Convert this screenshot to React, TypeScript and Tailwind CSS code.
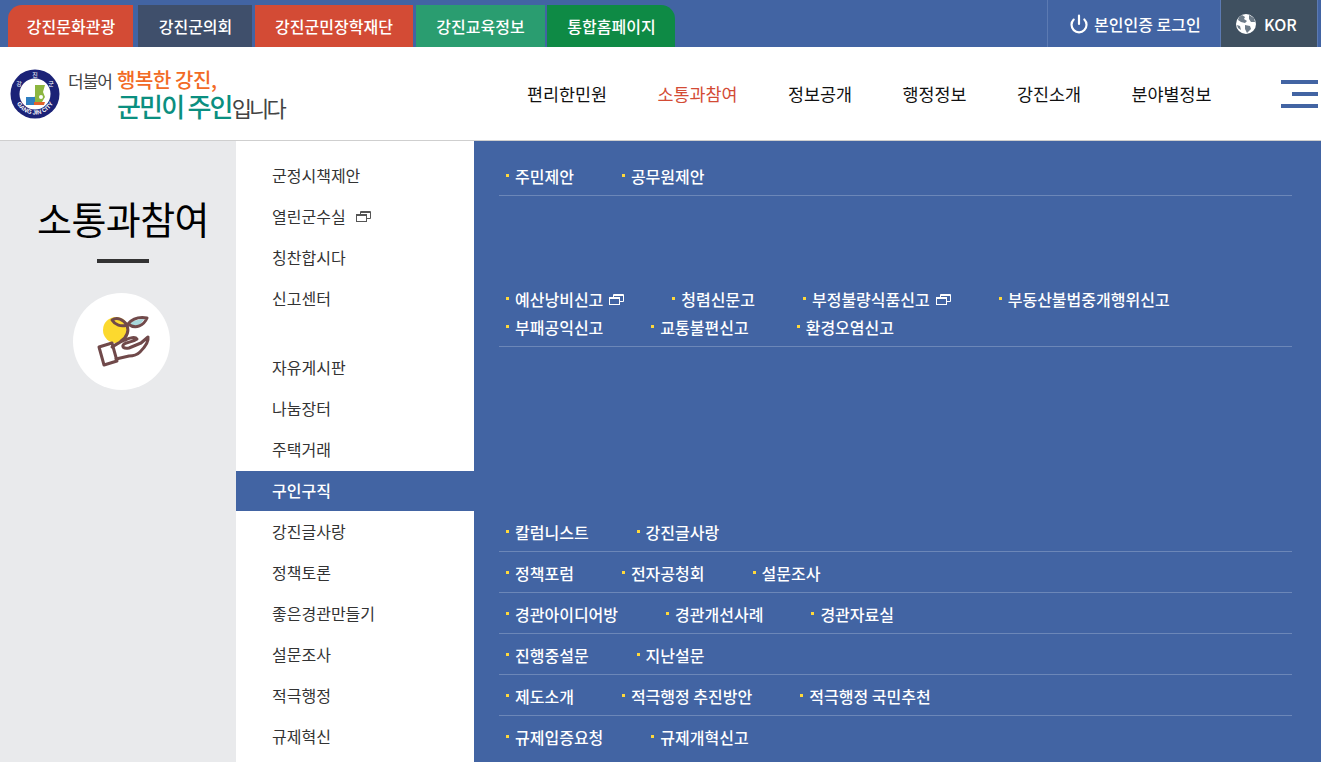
import { Power } from 'lucide-react'

interface SubItem {
  label: string
  external?: boolean
}

interface MenuRow {
  label: string
  external?: boolean
  active?: boolean
  subs?: SubItem[][]
}

const topTabs = [
  { label: '강진문화관광', className: 'ml-2 w-[125px] rounded-tl-[14px] bg-[#d34b35] pl-px' },
  { label: '강진군의회', className: 'ml-[5px] w-[114px] bg-[#3f4f6b] pl-px' },
  { label: '강진군민장학재단', className: 'ml-[3px] w-[158px] bg-[#d34b35]' },
  { label: '강진교육정보', className: 'ml-[3px] w-[129px] bg-[#2a9d70]' },
  { label: '통합홈페이지', className: 'ml-[2px] w-[128px] rounded-tr-[14px] bg-[#0e8a45] pl-px' },
]

const navItems = ['편리한민원', '소통과참여', '정보공개', '행정정보', '강진소개', '분야별정보']

const menuRows: MenuRow[] = [
  { label: '군정시책제안', subs: [[{ label: '주민제안' }, { label: '공무원제안' }]] },
  { label: '열린군수실', external: true },
  { label: '칭찬합시다' },
  {
    label: '신고센터',
    subs: [
      [
        { label: '예산낭비신고', external: true },
        { label: '청렴신문고' },
        { label: '부정불량식품신고', external: true },
        { label: '부동산불법중개행위신고' },
      ],
      [{ label: '부패공익신고' }, { label: '교통불편신고' }, { label: '환경오염신고' }],
    ],
  },
  { label: '자유게시판' },
  { label: '나눔장터' },
  { label: '주택거래' },
  { label: '구인구직', active: true },
  { label: '강진글사랑', subs: [[{ label: '칼럼니스트' }, { label: '강진글사랑' }]] },
  { label: '정책토론', subs: [[{ label: '정책포럼' }, { label: '전자공청회' }, { label: '설문조사' }]] },
  {
    label: '좋은경관만들기',
    subs: [[{ label: '경관아이디어방' }, { label: '경관개선사례' }, { label: '경관자료실' }]],
  },
  { label: '설문조사', subs: [[{ label: '진행중설문' }, { label: '지난설문' }]] },
  {
    label: '적극행정',
    subs: [[{ label: '제도소개' }, { label: '적극행정 추진방안' }, { label: '적극행정 국민추천' }]],
  },
  { label: '규제혁신', subs: [[{ label: '규제입증요청' }, { label: '규제개혁신고' }]] },
]

const WindowIcon = ({ color }: { color: string }) => (
  <svg width="15" height="11" viewBox="0 0 15 11" fill="none" stroke={color} className="shrink-0">
    <path d="M4.5 3V.5h10v7H11" />
    <line x1="4.5" y1="1.5" x2="14.5" y2="1.5" />
    <rect x="0.5" y="3.5" width="10" height="7" />
    <line x1="0.5" y1="4.5" x2="10.5" y2="4.5" />
  </svg>
)

const GlobeIcon = () => (
  <svg width="20" height="20" viewBox="0 0 20 20">
    <circle cx="10" cy="10" r="10" fill="#fff" />
    <path d="M6 1 9 3 8 5 11 7 9 9 5 8 2 6 3 3Z" fill="#6d7b88" />
    <path d="M13 1 18 4 19 8 15 8 13 5Z" fill="#6d7b88" />
    <path d="M9 11 14 12 15 15 11 19 9 15Z" fill="#6d7b88" />
    <path d="M1 11 4 12 5 16 2 14Z" fill="#6d7b88" />
  </svg>
)

const CitySeal = () => (
  <svg width="50" height="50" viewBox="0 0 50 50" className="shrink-0">
    <circle cx="25" cy="25" r="24.5" fill="#1b2277" />
    <circle cx="25" cy="25" r="15.5" fill="#fff" />
    <defs>
      <path id="seal-bottom" d="M4.5 25a20.5 20.5 0 0 0 41 0" />
    </defs>
    <text fontSize="6" fontWeight="700" fill="#fff" fontFamily="'Liberation Sans', sans-serif">
      <textPath href="#seal-bottom" startOffset="50%" textAnchor="middle">
        GANG JIN CITY
      </textPath>
    </text>
    <text x="25" y="8" fontSize="6" fill="#fff" textAnchor="middle" fontFamily="'Noto Sans CJK KR', sans-serif">
      진
    </text>
    <text x="9" y="17" fontSize="6" fill="#fff" textAnchor="middle" fontFamily="'Noto Sans CJK KR', sans-serif">
      강
    </text>
    <text x="41" y="17" fontSize="6" fill="#fff" textAnchor="middle" fontFamily="'Noto Sans CJK KR', sans-serif">
      군
    </text>
    <path d="M25 16h10l-2 7 2 5-3 5H22l3-6Z" fill="#8cb63f" />
    <path d="M16 28h9v8h-9Z" fill="#2f7fc1" />
    <path d="M24 33h11l-1 3H24Z" fill="#e2622b" />
    <circle cx="31" cy="28" r="2" fill="#fff" />
  </svg>
)

const HandPlantIcon = () => (
  <svg width="54" height="52" viewBox="0 0 54 52" fill="none" className="ml-[5px]">
    <circle cx="19" cy="14" r="13" fill="#fcd92e" />
    <path d="M33 7C38 4 43 3 47 3 45 7 42 10 37 11Z" fill="#a8d8dc" />
    <g stroke="#70494a" strokeWidth="3" strokeLinecap="round" strokeLinejoin="round">
      <path d="M30 9C26 3 20 1 15 4 18 9 24 11 30 9Z" />
      <path d="M31 8C36 2 44 1 50 2 47 9 39 14 31 8Z" />
      <path d="M30 9C32 15 30 21 24 25" />
      <path d="M15 31C20 28 24 25 28 24 33 22 38 20 40 23 36 26 30 26 27 28 24 31 27 33 32 32L44 27 51 21C52 26 47 32 43 36 40 39 36 40 32 40L19 43" />
      <path d="M2 31 15 27 20 45 7 49Z" />
    </g>
  </svg>
)

const SubLink = ({ item }: { item: SubItem }) => (
  <a className="relative flex items-center gap-[6px] whitespace-nowrap pl-[16px] text-[16px] font-medium leading-[28px] text-white">
    <span className="absolute left-[7px] top-[12px] h-[3px] w-[3px] bg-[#ffd83a]" />
    {item.label}
    {item.external && <WindowIcon color="#fff" />}
  </a>
)

const Row = ({ row, last }: { row: MenuRow; last: boolean }) => (
  <div className="flex">
    <div
      className={`flex w-[238px] shrink-0 items-start pl-[36px] ${
        row.active ? 'border-t border-white bg-[#4264a3] pt-[5px] font-medium text-white' : 'bg-white pt-[6px] text-[#333]'
      }`}
    >
      <span className="flex items-center gap-[10px] text-[16px] leading-[28px]">
        {row.label}
        {row.external && <WindowIcon color="#555" />}
      </span>
    </div>
    <div className="min-h-[41px] flex-1 bg-[#4264a3] pl-[25px] pr-[29px]">
      {row.subs && (
        <div className={`pb-[5px] pt-[7px] ${last ? '' : 'border-b border-[#6c87b8]'}`}>
          {row.subs.map((line, i) => (
            <div key={i} className="flex gap-[41px]">
              {line.map((item) => (
                <SubLink key={item.label} item={item} />
              ))}
            </div>
          ))}
        </div>
      )}
    </div>
  </div>
)

export default function App() {
  return (
    <div className="h-[762px] w-[1321px] overflow-hidden bg-white font-['Noto_Sans_CJK_KR',sans-serif]">
      {/* top utility bar */}
      <div className="flex h-[47px] items-end bg-[#4264a3]">
        {topTabs.map((tab) => (
          <a
            key={tab.label}
            className={`flex h-[42px] items-center justify-center text-[16px] font-medium text-white ${tab.className}`}
          >
            {tab.label}
          </a>
        ))}
        <div className="ml-auto flex h-full">
          <a className="flex w-[173px] items-center gap-[5px] border-l border-[#5c7ab2] pl-[21px] text-[16px] font-medium text-white">
            <Power size={20} strokeWidth={2.6} />
            본인인증 로그인
          </a>
          <a className="flex w-[98px] items-center gap-[8px] border-x border-[#5c7ab2] bg-[#3f5060] pl-[15px] text-[16px] font-medium text-white">
            <GlobeIcon />
            KOR
          </a>
          <div className="w-[3px]" />
        </div>
      </div>

      {/* header */}
      <div className="flex h-[94px] items-center border-b border-[#cfcfcf]">
        <div className="ml-[10px] flex w-[517px] shrink-0 items-center">
          <CitySeal />
          <div className="ml-[8px] pb-[4px] text-[#444]">
            <div className="flex h-[29px] items-center">
              <span className="w-[49px] pt-[3px] text-[17px] leading-[26px] tracking-[-1px]">더불어</span>
              <span className="text-[20px] font-medium leading-[29px] tracking-[-0.4px] text-[#f26a26]">행복한 강진,</span>
            </div>
            <div className="flex h-[24px] items-baseline pl-[49px]">
              <span className="text-[26px] font-medium leading-[24px] tracking-[-1.8px] text-[#0b8f80]">군민이 주인</span>
              <span className="text-[22px] leading-[24px] tracking-[-2.8px]">입니다</span>
            </div>
          </div>
        </div>
        <nav className="flex gap-[50.5px]">
          {navItems.map((item) => (
            <a
              key={item}
              className={`text-[17.4px] leading-[24px] ${
                item === '소통과참여' ? 'text-[#d34b35]' : 'text-[#111]'
              }`}
            >
              {item}
            </a>
          ))}
        </nav>
        <div className="ml-auto mr-[3px] flex w-[37px] flex-col items-end gap-[8px]">
          <span className="h-[4px] w-[37px] bg-[#4264a3]" />
          <span className="h-[4px] w-[26px] bg-[#4264a3]" />
          <span className="h-[4px] w-[37px] bg-[#4264a3]" />
        </div>
      </div>

      {/* mega menu */}
      <div className="flex h-[621px]">
        <aside className="flex w-[236px] shrink-0 flex-col items-center bg-[#e9eaec]">
          <h2 className="ml-[10px] mt-[48px] text-[38px] leading-[58px] tracking-[-0.6px] text-black">소통과참여</h2>
          <div className="ml-[10px] mt-[12px] h-[4px] w-[52px] bg-[#333]" />
          <div className="ml-[6px] mt-[30px] flex h-[97px] w-[97px] items-center justify-center rounded-full bg-white">
            <HandPlantIcon />
          </div>
        </aside>
        <div className="flex flex-1 flex-col">
          <div className="flex h-[14px]">
            <div className="w-[238px] bg-white" />
            <div className="flex-1 bg-[#4264a3]" />
          </div>
          {menuRows.map((row, i) => (
            <Row key={row.label} row={row} last={i === menuRows.length - 1} />
          ))}
          <div className="flex flex-1">
            <div className="w-[238px] bg-white" />
            <div className="flex-1 bg-[#4264a3]" />
          </div>
        </div>
      </div>
    </div>
  )
}
